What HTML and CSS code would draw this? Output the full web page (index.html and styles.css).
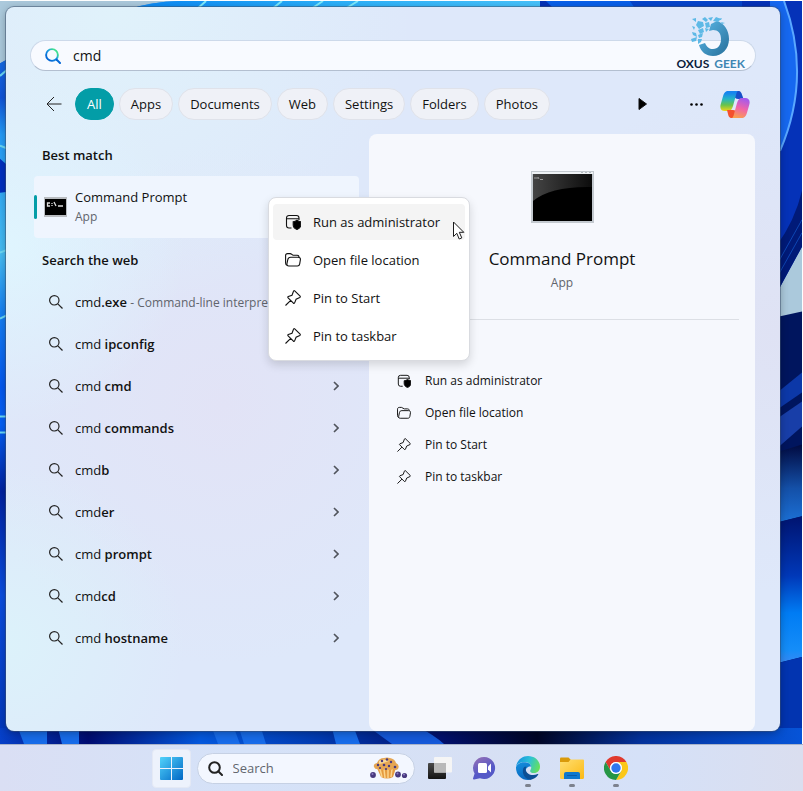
FILE: index.html
```html
<!DOCTYPE html>
<html lang="en">
<head>
<meta charset="UTF-8">
<meta name="viewport" content="width=device-width, initial-scale=1.0">
<title>Search</title>
<link rel="stylesheet" href="styles.css">
</head>
<body>

<!-- shared icons -->
<svg class="icon-defs" aria-hidden="true">
    <symbol id="icon-search" viewBox="0 0 14 14"><circle cx="5.3" cy="5.3" r="4.7"/><path d="M8.8 8.8 13.5 13.5"/></symbol>
    <symbol id="icon-chevron" viewBox="0 0 6 10"><path d="M1 1l4 4-4 4"/></symbol>
    <symbol id="icon-admin" viewBox="0 0 16 16"><path d="M6.5 14H4a2.5 2.5 0 0 1-2.5-2.5V4A2.5 2.5 0 0 1 4 1.500h7.500A2.500 2.500 0 0 1 14 4v2M1.500 4.800H14"/><path class="filled" d="M12 6.300c1.200.9 2.400 1.300 3.800 1.400v3.200c0 2.100-1.500 3.600-3.800 4.600-2.300-1-3.800-2.500-3.800-4.600V7.700c1.400-.1 2.600-.5 3.800-1.400z"/></symbol>
    <symbol id="icon-folder" viewBox="0 0 16 16"><path d="M2.300 13.300C1 13 .6 12 .6 11V3.600c0-1.200.8-2 2-2h2.500c1.600 0 1.800 1.700 3.300 1.700H12c1.200 0 2 .6 2 1.900"/><path d="M5.600 5.300h7.600c1.500 0 2.400.9 2.200 2.300l-.7 4.300c-.2 1.400-1 2.100-2.300 2.100H3.700c-1.400 0-2-.9-1.800-2.100l.9-4.300c.3-1.500 1.200-2.300 2.800-2.300z"/></symbol>
    <symbol id="icon-pin" viewBox="0 0 16 16"><path d="M9.700.9l5.400 5.300c.4.500.2 1-.3 1.300l-3.700 1.700-1.500 3.700c-.2.600-.8.700-1.200.2L3.100 7.800c-.5-.5-.3-1 .2-1.200L7 5.200l1.500-4c.2-.6.700-.7 1.200-.3zM5.700 10.400.5 15.500"/></symbol>
</svg>

<main class="desktop">
    <svg class="wallpaper" viewBox="0 0 802 744" preserveAspectRatio="none" aria-hidden="true">
        <defs>
            <linearGradient id="wp-left" x1="0" y1="0" x2="0" y2="1">
                <stop offset="0" stop-color="#1f8cf5"/><stop offset=".13" stop-color="#1054d8"/>
                <stop offset=".18" stop-color="#249bf8"/><stop offset=".34" stop-color="#45bdf3"/>
                <stop offset=".42" stop-color="#1580f3"/><stop offset=".52" stop-color="#0458f0"/>
                <stop offset=".57" stop-color="#0560f6"/><stop offset=".66" stop-color="#0122a0"/>
                <stop offset=".8" stop-color="#0a4ee0"/><stop offset="1" stop-color="#0236b8"/>
            </linearGradient>
            <linearGradient id="wp-top" x1="0" y1="0" x2="1" y2="0">
                <stop offset="0" stop-color="#0785f4"/><stop offset=".5" stop-color="#2bb0fa"/><stop offset="1" stop-color="#48c3fb"/>
            </linearGradient>
            <linearGradient id="wp-right" x1="0" y1="0" x2="0" y2="1">
                <stop offset="0" stop-color="#010a40"/><stop offset=".55" stop-color="#1450a8"/><stop offset="1" stop-color="#1c72d8"/>
            </linearGradient>
            <linearGradient id="wp-wave" x1="0" y1="0" x2="0" y2="1">
                <stop offset="0" stop-color="#001470"/><stop offset=".4" stop-color="#0038b8"/>
                <stop offset=".65" stop-color="#007cf4"/><stop offset=".9" stop-color="#158df8"/><stop offset="1" stop-color="#3c88f4"/>
            </linearGradient>
            <linearGradient id="wp-bottom" x1="0" y1="0" x2="1" y2="0">
                <stop offset="0" stop-color="#0640c8"/><stop offset=".11" stop-color="#010c70"/>
                <stop offset=".25" stop-color="#0458dc"/><stop offset=".4" stop-color="#023ab0"/>
                <stop offset=".55" stop-color="#02106c"/><stop offset=".67" stop-color="#010626"/>
                <stop offset=".8" stop-color="#03329c"/><stop offset="1" stop-color="#0654d8"/>
            </linearGradient>
        </defs>
        <rect width="802" height="744" fill="#abc9dc"/>
        <path d="M0 62Q6 58 12 56V30L130 8Q150 1 180 0H480V744H0z" fill="url(#wp-left)"/>
        <path d="M0 0H134L120 8H12V56Q6 58 0 62z" fill="#abc9dc"/>
        <path d="M130 8Q150 1 180 0H550V30H120z" fill="url(#wp-top)"/>
        <path d="M197 8l9-8M272 8l10-8M311 8l12-8M345 8l13-8" stroke="#7ce9fb" stroke-width="2"/>
        <path d="M0 75l8-7M0 145l8 3M0 252l8-3M0 318l8-4M0 416h8M0 432h8" stroke="#6bd9f5" stroke-width="2"/>
        <path d="M0 158l8 7v26l-8 1z" fill="#0030c0"/>
        <path d="M540 0H802V246L770 305V30H540z" fill="#0532b8"/>
        <path d="M546 0h84l18 12h-90z" fill="#0860ea"/>
        <path d="M630 0h112v12h-104z" fill="#0645cc"/>
        <path d="M784 0Q812 76 780 150L770 160V0z" fill="#1668f0"/>
        <path d="M784 0Q812 76 780 150" fill="none" stroke="#5aa8ff" stroke-width="2"/>
        <path d="M776 246Q795 220 802 190V246L770 305z" fill="#011a78"/>
        <path d="M778 275l24-43M778 262l24-43" stroke="#0e46b4"/>
        <path d="M770 318l32-7V744H770z" fill="#00155e"/>
        <path d="M770 398l32-26v20l-32 22z" fill="#0c38a8"/>
        <path d="M770 423l32-22v25l-32 28z" fill="#183ea8"/>
        <path d="M770 454l32-10v72l-32 8z" fill="url(#wp-right)"/>
        <path d="M770 524l32-8v141l-32 8z" fill="url(#wp-wave)"/>
        <path d="M770 665l32-8v87h-32z" fill="#0234b0"/>
        <path d="M0 728h802v16H0z" fill="url(#wp-bottom)"/>
        <path d="M18 728h29v16H24zM58 728h21v16H62zM212 728h22l6 16h-22zM239 728h22l5 16h-22zM332 728h22l6 16h-24z" fill="#176be8"/>
        <path d="M420 728q14 7 24 16h-52l-22-16z" fill="#1458d8"/>
    </svg>

    <section class="flyout" aria-label="Search results">
        <div class="search-box">
            <label for="query">
                <svg class="search-logo" viewBox="0 0 16 16" aria-hidden="true">
                    <defs><linearGradient id="bing" x1="0" y1="1" x2="1" y2="0"><stop offset=".2" stop-color="#0468d7"/><stop offset=".55" stop-color="#1b9de2"/><stop offset=".8" stop-color="#41df91"/></linearGradient></defs>
                    <circle cx="7" cy="7" r="5.900" fill="none" stroke="url(#bing)" stroke-width="1.900"/>
                    <path d="M11.500 11.500 15 15" stroke="#0468d7" stroke-width="2" stroke-linecap="round"/>
                </svg>
            </label>
            <input id="query" class="search-input" type="text" value="cmd" aria-label="Search">
            <div class="watermark">
                <svg viewBox="0 0 40 40" aria-hidden="true">
                    <defs><linearGradient id="ring" x1="0" y1="0" x2="1" y2="1"><stop offset="0" stop-color="#5db9e9"/><stop offset=".8" stop-color="#317da9"/></linearGradient></defs>
                    <path d="M20 7l6-3c7 2 12 9 12 18 0 10-7 17-16 17-7 0-12-4-14-11l6-2c2 4 4 6 8 6 5 0 8-4 8-10s-3-9-8-9l-4 1z" fill="url(#ring)"/>
                    <path d="M11 2l3-2 3 3-2 2zM17 1l5-1-2 4zM22 4l3-4 5 2-3 3zM1 2l4-1v4zM7 4l5 1 1 4-5 3-3-4zM14 6l4-1 1 5-4 1zM1 9l3 1-1 3zM7 13l5-2 1 4-4 2zM14 11l4 1-3 3zM1 15l4 1 1 4-4-2zM7 18l5-2-1 4-3 1zM0 22l6-2-1 4-4 1zM7 22l4 0-1 3-3 2zM30 5l4 1-3 1zM28 2l3-1-1 2z" fill="#5eb9e6"/>
                </svg>
                <p><span class="dark">OXUS</span> <span>GEEK</span></p>
            </div>
        </div>

        <nav class="filters" aria-label="Filters">
            <button class="back" aria-label="Back"><svg viewBox="0 0 16 16"><path d="M15.500 8H1M8 1 1 8l7 7"/></svg></button>
            <button class="filter active">All</button>
            <button class="filter">Apps</button>
            <button class="filter">Documents</button>
            <button class="filter">Web</button>
            <button class="filter">Settings</button>
            <button class="filter">Folders</button>
            <button class="filter">Photos</button>
            <div class="filter-tools">
                <button class="tool" aria-label="More filters"><svg class="play" viewBox="0 0 9 12"><path d="M1 .5 8.500 6 1 11.500z"/></svg></button>
                <button class="tool" aria-label="Options"><svg class="dots" viewBox="0 0 13 3"><circle cx="1.500" cy="1.500" r="1.300"/><circle cx="6.500" cy="1.500" r="1.300"/><circle cx="11.500" cy="1.500" r="1.300"/></svg></button>
                <button class="tool" aria-label="Copilot">
                    <svg class="copilot" viewBox="0 0 30 27">
                        <defs>
                            <linearGradient id="cp-a" x1="0" y1="0" x2="0" y2="1"><stop offset=".1" stop-color="#1685ef"/><stop offset=".4" stop-color="#25b5c5"/><stop offset=".7" stop-color="#69c34b"/><stop offset="1" stop-color="#f1d419"/></linearGradient>
                            <linearGradient id="cp-b" x1=".6" y1="0" x2=".3" y2="1"><stop offset="0" stop-color="#a45aed"/><stop offset=".5" stop-color="#f064a8"/><stop offset="1" stop-color="#fba04c"/></linearGradient>
                        </defs>
                        <path d="M13 0h5c3 0 3.500 2 4.500 5l1 3h-5c-3 0-4.500-2-5-5z" fill="#174fc9"/>
                        <path d="M18 0H8C5 0 3.800 2.500 2.800 6L.8 13c-1.300 4 .2 7 4 7H8c3 0 4-2 5-5l3-11c.5-2 1-3.500 2-4z" fill="url(#cp-a)"/>
                        <path d="M7 19h6c2 0 3 1 4 3 .5 2 1 4 3 5h-8c-3 0-3.500-2-4-4z" fill="#f4512d"/>
                        <path d="M12 27h10c3 0 4.200-2.500 5.200-6l2-7c1.300-4-.2-7-4-7H22c-3 0-4 2-5 5l-3 11c-.5 2-1 3.500-2 4z" fill="url(#cp-b)"/>
                    </svg>
                </button>
            </div>
        </nav>

        <div class="columns">
            <div class="results">
                <h2>Best match</h2>
                <div class="best-match">
                    <a class="best-link" href="#">
                        <svg class="cmd-small" viewBox="0 0 23 20" aria-hidden="true"><path fill="#b9bcc0" d="M0 0h23v20H0z"/><path d="M1 2h21v16H1z"/><path stroke="#ddd" stroke-width="1.300" fill="none" d="M6 6H3.500v3H6M8 6v1M8 8v1M10 5l2 4M14 9h5"/></svg>
                        <span class="best-text">Command Prompt<small>App</small></span>
                    </a>
                    <ul class="context-menu">
                        <li><button class="hovered"><svg class="icon"><use href="#icon-admin"/></svg>Run as administrator</button></li>
                        <li><button><svg class="icon"><use href="#icon-folder"/></svg>Open file location</button></li>
                        <li><button><svg class="icon"><use href="#icon-pin"/></svg>Pin to Start</button></li>
                        <li><button><svg class="icon"><use href="#icon-pin"/></svg>Pin to taskbar</button></li>
                    </ul>
                    <svg class="cursor" viewBox="0 0 12 19" aria-hidden="true"><path d="M.5 1v14.500l3.300-3.200 2.400 5.700 2.600-1.100-2.500-5.600h4.500z" fill="#fff" stroke="#1a1a1a"/></svg>
                </div>

                <h2>Search the web</h2>
                <ul class="web-list">
                    <li><a href="#"><svg class="glass"><use href="#icon-search"/></svg><span>cmd<b>.exe</b> <small>- Command-line interpreter</small></span><svg class="chevron"><use href="#icon-chevron"/></svg></a></li>
                    <li><a href="#"><svg class="glass"><use href="#icon-search"/></svg><span>cmd <b>ipconfig</b></span><svg class="chevron"><use href="#icon-chevron"/></svg></a></li>
                    <li><a href="#"><svg class="glass"><use href="#icon-search"/></svg><span>cmd <b>cmd</b></span><svg class="chevron"><use href="#icon-chevron"/></svg></a></li>
                    <li><a href="#"><svg class="glass"><use href="#icon-search"/></svg><span>cmd <b>commands</b></span><svg class="chevron"><use href="#icon-chevron"/></svg></a></li>
                    <li><a href="#"><svg class="glass"><use href="#icon-search"/></svg><span>cmd<b>b</b></span><svg class="chevron"><use href="#icon-chevron"/></svg></a></li>
                    <li><a href="#"><svg class="glass"><use href="#icon-search"/></svg><span>cmd<b>er</b></span><svg class="chevron"><use href="#icon-chevron"/></svg></a></li>
                    <li><a href="#"><svg class="glass"><use href="#icon-search"/></svg><span>cmd <b>prompt</b></span><svg class="chevron"><use href="#icon-chevron"/></svg></a></li>
                    <li><a href="#"><svg class="glass"><use href="#icon-search"/></svg><span>cmd<b>cd</b></span><svg class="chevron"><use href="#icon-chevron"/></svg></a></li>
                    <li><a href="#"><svg class="glass"><use href="#icon-search"/></svg><span>cmd <b>hostname</b></span><svg class="chevron"><use href="#icon-chevron"/></svg></a></li>
                </ul>
            </div>

            <div class="details">
                <div class="details-head">
                    <svg class="cmd-large" viewBox="0 0 63 52" aria-hidden="true">
                        <defs><linearGradient id="gloss" x1="0" y1="0" x2="1" y2="0"><stop offset="0" stop-color="#444"/><stop offset="1" stop-color="#0c0c0c"/></linearGradient></defs>
                        <path fill="#c3c9cf" d="M0 0h63v52H0z"/><path fill="#eef2f5" d="M1 1h61v2H1z"/>
                        <path fill="#b4babf" d="M50 1h2v1h-2zM54 1h2v1h-2zM58 1h2v1h-2z"/>
                        <path d="M2 3h59v47H2z"/>
                        <path fill="url(#gloss)" d="M2 3h59v13Q20 15 2 30z"/>
                        <path stroke="#999" fill="none" d="M4 6v2M6 6v2M7 6l1 2M9 8.500h3"/>
                    </svg>
                    <h1>Command Prompt</h1>
                    <p>App</p>
                </div>
                <ul class="actions">
                    <li><button><svg class="icon"><use href="#icon-admin"/></svg>Run as administrator</button></li>
                    <li><button><svg class="icon"><use href="#icon-folder"/></svg>Open file location</button></li>
                    <li><button><svg class="icon"><use href="#icon-pin"/></svg>Pin to Start</button></li>
                    <li><button><svg class="icon"><use href="#icon-pin"/></svg>Pin to taskbar</button></li>
                </ul>
            </div>
        </div>
    </section>
</main>

<footer class="taskbar">
    <button class="start" aria-label="Start">
        <svg viewBox="0 0 23 23">
            <defs><linearGradient id="win" gradientUnits="userSpaceOnUse" x1="0" y1="0" x2="23" y2="23"><stop offset="0" stop-color="#52d3fb"/><stop offset="1" stop-color="#0067c5"/></linearGradient></defs>
            <path fill="url(#win)" d="M1 0h10v11H0V1q0-1 1-1zM12 0h10q1 0 1 1v10H12zM0 12h11v11H1q-1 0-1-1zM12 12h11v10q0 1-1 1H12z"/>
        </svg>
    </button>
    <div class="taskbar-search">
        <label for="taskbar-query"><svg class="taskbar-glass" viewBox="0 0 15 15" aria-hidden="true"><circle cx="6.500" cy="6.500" r="5.300"/><path d="M10.500 10.500 14 14"/></svg></label>
        <input id="taskbar-query" type="text" placeholder="Search" aria-label="Search">
        <svg class="muffin" viewBox="0 0 38 22" aria-hidden="true">
            <path d="M7 11h19l-3 9q-6 3-12 0z" fill="#e59a3f"/>
            <path d="M10 12l2 8M14 12l1 9M18 12v9M22 12l-1 8" stroke="#fbd48c" stroke-width="1.500"/>
            <path d="M4 10q-1-3 3-4 2-5 7-5 3-1 6 0 5 1 6 5 4 2 2 6-2 2-5 0-4 2-7 0-4 2-6 0-5 1-6-2z" fill="#e5a653"/>
            <path d="M9 4q5-3 10 0-5 2-10 3z" fill="#f8d997"/>
            <g fill="#48397e"><circle cx="12" cy="4" r="1.200"/><circle cx="17" cy="2.500" r="1.200"/><circle cx="21" cy="5" r="1.200"/><circle cx="8" cy="8" r="1.200"/><circle cx="14" cy="8" r="1.300"/><circle cx="19" cy="9" r="1.200"/><circle cx="25" cy="10" r="1.300"/><circle cx="10" cy="11" r="1.100"/><circle cx="16" cy="12" r="1.100"/><circle cx="3" cy="18" r="2.900"/><circle cx="28" cy="17.500" r="2.900"/><circle cx="34.500" cy="18.500" r="2.600"/></g>
            <g fill="#8b7cc2"><circle cx="2.500" cy="17" r="1"/><circle cx="27.500" cy="16.500" r="1"/><circle cx="34" cy="17.500" r="1"/></g>
        </svg>
    </div>
    <button class="app" aria-label="Task view">
        <svg viewBox="0 0 24 24"><defs><linearGradient id="tv" x1="0" y1="0" x2="0" y2="1"><stop offset="0" stop-color="#4a4a4a"/><stop offset="1" stop-color="#141414"/></linearGradient></defs><rect y="7" width="18" height="16" rx="1" fill="url(#tv)"/><rect x="6" y="1" width="18" height="15.500" rx="1" fill="#f5f5f5"/><path d="M6 7h12v9.500H6z" fill="#b9b9b9"/></svg>
    </button>
    <button class="app" aria-label="Chat">
        <svg viewBox="0 0 24 24"><defs><linearGradient id="chat" x1="0" y1="0" x2=".5" y2="1"><stop offset="0" stop-color="#9a72b4"/><stop offset=".7" stop-color="#5559c7"/></linearGradient></defs><path d="M12.500 1A11 11 0 1 1 8 22.200L2 23.500Q.8 23.500 1 22.500l1.600-5A11 11 0 0 1 12.500 1z" fill="url(#chat)"/><rect x="6" y="7" width="9" height="10" rx="1.500" fill="#fff"/><path d="M16 10.500l3-3v9l-3-3z" fill="#fff"/></svg>
    </button>
    <button class="app running" aria-label="Edge">
        <svg viewBox="0 0 24 24">
            <defs>
                <linearGradient id="edge-a" x1="0" y1=".3" x2="1" y2=".6"><stop offset="0" stop-color="#1490df"/><stop offset=".5" stop-color="#2cc1d8"/><stop offset="1" stop-color="#67e15a"/></linearGradient>
                <linearGradient id="edge-b" x1="0" y1="0" x2=".4" y2="1"><stop offset="0" stop-color="#1591df"/><stop offset="1" stop-color="#0a67be"/></linearGradient>
            </defs>
            <path d="M0 11C.8 4.500 5.800 0 12 0c7 0 12 5 12 10.500 0 4-2.500 6.500-6 6.500-3.500 0-4.500-1.800-3.500-3C16 12 15.500 7 10 6 5 5.500 1.500 7.500 0 11z" fill="url(#edge-a)"/>
            <path d="M0 11C1.500 7.500 5 5.800 9.500 6.200c3.500.3 5.500 2.300 5.500 4.500-3-.8-5.500 1.800-5.500 5 0 4.500 4 7.500 7 7-1.500.9-3 1.300-4.500 1.300A12 12 0 0 1 0 12z" fill="url(#edge-b)"/>
            <path d="M8.200 11C5.500 13.500 6.500 23 14.500 23.700c3.500-.5 6-2.200 7.800-5.200.2-.5-.2-.8-.6-.5-5.500 2.700-11.500.2-12-4.500 0-1 .2-2 .7-3z" fill="#0d4f94"/>
        </svg>
    </button>
    <button class="app running" aria-label="File Explorer">
        <svg viewBox="0 0 24 24"><defs><linearGradient id="fold" x1="0" y1="0" x2="1" y2="1"><stop offset="0" stop-color="#ffdf72"/><stop offset="1" stop-color="#fbb914"/></linearGradient></defs><path d="M0 2.500Q0 1.500 1 1.500h7.500l2 2V9H0z" fill="#d99a0a"/><path d="M0 6h8.500l2-2.500H23q1 0 1 1v17q0 1.500-1.500 1.500h-21Q0 23 0 21.500z" fill="url(#fold)"/><path d="M4 23v-5q0-2 2-2h12q2 0 2 2v5z" fill="#0f78cd"/><path d="M7.500 19.500h9" stroke="#0b5ba8" stroke-linecap="round"/></svg>
    </button>
    <button class="app running" aria-label="Chrome">
        <svg viewBox="0 0 24 24"><path d="M1.600 6A12 12 0 0 1 22.400 6H12a6 6 0 0 0-5.200 9z" fill="#e03a2e"/><path d="M22.400 6A12 12 0 0 1 12 24l5.200-9A6 6 0 0 0 12 6z" fill="#fbc718"/><path d="M12 24A12 12 0 0 1 1.600 6l5.200 9a6 6 0 0 0 10.400 0z" fill="#269646"/><circle cx="12" cy="12" r="6" fill="#fff"/><circle cx="12" cy="12" r="4.700" fill="#2f77ee"/></svg>
    </button>
</footer>

</body>
</html>
```
FILE: styles.css
```css
* {
    box-sizing: border-box;
}
body {
    margin: 0;
    min-height: 100vh;
    display: flex;
    flex-direction: column;
    background: #fff;
    color: #111;
    font-family: "Open Sans", "Noto Sans", sans-serif;
    font-size: 13px;
    line-height: 20px;
}
button,
input {
    font: inherit;
    color: inherit;
    background: none;
    border: none;
    padding: 0;
}
button {
    cursor: pointer;
}
a {
    color: inherit;
    text-decoration: none;
}
ul {
    list-style: none;
    margin: 0;
    padding: 0;
}
h1, h2, p {
    margin: 0;
}
svg {
    display: block;
    flex-shrink: 0;
}
.icon-defs {
    position: absolute;
    width: 0;
    height: 0;
}

/* desktop */
.desktop {
    position: relative;
    flex: 1;
    display: flex;
    padding: 6px 22px 13px 6px;
    border-top: 1px solid #fff;
    border-right: 1px solid #fff;
}
.wallpaper {
    position: absolute;
    inset: 0;
    width: 100%;
    height: 100%;
}

/* search flyout */
.flyout {
    position: relative;
    flex: 1;
    min-width: 0;
    display: flex;
    flex-direction: column;
    padding: 33px 24px 0;
    border-radius: 8px;
    background:
        radial-gradient(circle at 0 33%, #dff5fe 0, transparent 180px),
        radial-gradient(circle at 0 88%, #dcf2fa 0, transparent 180px),
        radial-gradient(circle at 14% 0, #e0f2fb 0, transparent 300px),
        radial-gradient(circle at 28% 55%, #e2e3f6 0, transparent 260px),
        radial-gradient(circle at 100% 45%, #dfe2f4 0, transparent 260px),
        #dee8fa;
    box-shadow: 0 0 0 1px rgba(60, 80, 110, 0.5), 0 2px 8px rgba(0, 0, 0, 0.3);
}
.search-box {
    position: relative;
    display: flex;
    align-items: center;
    height: 31px;
    padding: 0 14px;
    border-radius: 16px;
    border: 1px solid #cdd9ea;
    border-bottom-color: #b3bfd0;
    background: #f8faff;
}
.search-logo {
    width: 16px;
    height: 16px;
}
.search-input {
    flex: 1;
    min-width: 0;
    margin-left: 12px;
    font-size: 14px;
    outline: none;
}
.watermark {
    position: absolute;
    right: 10px;
    bottom: -1px;
    display: flex;
    flex-direction: column;
    align-items: center;
    color: #3f86b3;
    font: bold 12px/14px Lato, sans-serif;
    white-space: nowrap;
}
.watermark svg {
    width: 40px;
    height: 40px;
}
.watermark .dark {
    margin-right: 2px;
    color: #0b1d3c;
}

/* filter pills */
.filters {
    display: flex;
    align-items: center;
    gap: 5px;
    margin: 17px 0 14px;
    padding: 0 6px 0 16px;
}
.back {
    width: 24px;
    height: 32px;
}
.back svg {
    width: 16px;
    height: 16px;
    fill: none;
    stroke: #222;
}
.filter {
    height: 32px;
    padding: 0 11px;
    border: 1px solid #dfe2ea;
    border-radius: 16px;
    background: #eff1f7;
}
.filter.active {
    border-color: #039da7;
    background: #039da7;
    color: #fff;
}
.filter-tools {
    flex: 1;
    display: flex;
    justify-content: flex-end;
    align-items: center;
}
.tool .play {
    width: 9px;
    height: 12px;
    margin-right: 43px;
    stroke: #111;
    stroke-linejoin: round;
}
.tool .dots {
    width: 13px;
    height: 3px;
    margin-right: 17px;
}
.tool .copilot {
    width: 30px;
    height: 27px;
}

/* results */
.columns {
    flex: 1;
    display: grid;
    grid-template-columns: 325fr 386fr;
    gap: 10px;
    margin: 0 1px 0 4px;
}
.results {
    min-width: 0;
}
h2 {
    padding: 11px 8px;
    font-size: 13px;
    line-height: 20px;
    font-weight: 600;
}
.best-match {
    position: relative;
    margin-bottom: 1px;
}
.best-link {
    display: flex;
    align-items: center;
    gap: 8px;
    height: 62px;
    border-radius: 4px;
    background: #eff5fe;
}
.best-link::before {
    content: "";
    width: 3px;
    height: 24px;
    margin-right: -1px;
    border-radius: 2px;
    background: #039da7;
}
.cmd-small {
    width: 23px;
    height: 20px;
}
.best-text small {
    display: block;
}
small {
    font-size: 12px;
    color: #60646c;
}
.context-menu {
    position: absolute;
    left: 72%;
    top: 21px;
    z-index: 2;
    width: 202px;
    padding: 6px 4px 4px;
    border: 1px solid #d9dbe0;
    border-radius: 8px;
    background: #fff;
    box-shadow: 0 4px 10px rgba(0, 0, 0, 0.14);
}
.context-menu button {
    display: flex;
    align-items: center;
    gap: 12px;
    width: 100%;
    height: 36px;
    margin-bottom: 2px;
    padding: 0 12px;
    border-radius: 4px;
    white-space: nowrap;
}
.context-menu .hovered {
    background: #f4f4f4;
}
.icon {
    width: 16px;
    height: 16px;
    fill: none;
    stroke: #111;
    stroke-width: 1.1;
}
.filled {
    fill: #000;
}
.cursor {
    position: absolute;
    left: 129%;
    top: 45px;
    z-index: 3;
    width: 12px;
    height: 19px;
}
.web-list a {
    display: flex;
    align-items: center;
    gap: 12px;
    height: 42px;
    padding: 0 20px 0 15px;
}
.web-list span {
    flex: 1;
    min-width: 0;
    white-space: nowrap;
}
.web-list b {
    font-weight: 600;
}
.glass {
    width: 14px;
    height: 14px;
    fill: none;
    stroke: #222;
    stroke-width: 1.2;
}
.chevron {
    width: 6px;
    height: 10px;
    fill: none;
    stroke: #50545c;
    stroke-width: 1.6;
}

/* details panel */
.details {
    padding: 37px 16px 0;
    border-radius: 8px;
    background: #f6f8fd;
}
.details-head {
    display: flex;
    flex-direction: column;
    align-items: center;
    padding-bottom: 28px;
    border-bottom: 1px solid #dcdfe5;
}
.cmd-large {
    width: 63px;
    height: 52px;
}
.details h1 {
    margin: 24px 0 4px;
    font-size: 17px;
    line-height: 24px;
    font-weight: 400;
}
.details p {
    font-size: 12px;
    line-height: 16px;
    color: #60646c;
}
.actions {
    padding: 45px 12px;
}
.actions button {
    display: flex;
    align-items: center;
    gap: 14px;
    height: 32px;
    font-size: 12px;
}
.actions .icon {
    width: 14px;
    height: 14px;
}

/* taskbar */
.taskbar {
    position: relative;
    display: flex;
    align-items: center;
    justify-content: center;
    height: 47px;
    padding-right: 14px;
    border-top: 1px solid #a9b3c9;
    background: linear-gradient(90deg, #dadff4, #d5e2f8 30%, #d7e0f4 60%, #d5e1f8 80%, #dadeef);
}
.start {
    display: flex;
    align-items: center;
    justify-content: center;
    width: 39px;
    height: 39px;
    margin-right: 6px;
    border: 1px solid #e4e9f5;
    border-radius: 4px;
    background: #edf2fc;
}
.start svg {
    width: 23px;
    height: 23px;
}
.taskbar-search {
    display: flex;
    align-items: center;
    width: 218px;
    height: 31px;
    margin-right: 3px;
    padding: 0 6px 0 10px;
    border: 1px solid #c6d1e4;
    border-radius: 16px;
    background: #f3f7ff;
}
.taskbar-search input {
    flex: 1;
    min-width: 0;
    margin-left: 10px;
}
.taskbar-search input::placeholder {
    color: #62666e;
    opacity: 1;
}
.taskbar-glass {
    width: 15px;
    height: 15px;
    fill: none;
    stroke: #222;
    stroke-width: 2;
    stroke-linecap: round;
}
.muffin {
    width: 38px;
    height: 22px;
}
.app {
    position: relative;
    display: flex;
    align-items: center;
    justify-content: center;
    width: 44px;
    height: 40px;
}
.app svg {
    width: 24px;
    height: 24px;
}
.running::after {
    content: "";
    position: absolute;
    bottom: 1px;
    width: 6px;
    height: 3px;
    border-radius: 2px;
    background: #7d828e;
}
```
